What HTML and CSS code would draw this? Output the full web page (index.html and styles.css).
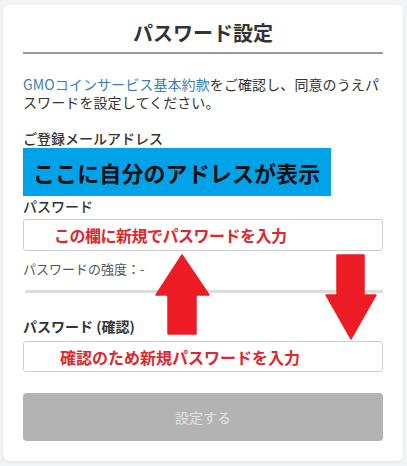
FILE: index.html
```html
<!DOCTYPE html>
<html lang="ja">
<head>
<meta charset="utf-8">
<link rel="stylesheet" href="styles.css">
</head>
<body>
<div class="card">
  <h1 class="title">パスワード設定</h1>
  <p class="lead"><a class="link" href="#">GMOコインサービス基本約款</a>をご確認し、同意のうえパスワードを設定してください。</p>
  <div class="label label-email">ご登録メールアドレス</div>
  <div class="email-box">ここに自分のアドレスが表示</div>
  <div class="label label-pass">パスワード</div>
  <div class="input"><span class="note note-1">この欄に新規でパスワードを入力</span></div>
  <div class="strength">パスワードの強度：-</div>
  <div class="bar"></div>
  <div class="label label-confirm">パスワード (確認)</div>
  <div class="input"><span class="note note-2">確認のため新規パスワードを入力</span></div>
  <button class="submit" type="button">設定する</button>
</div>
<svg class="arrows" width="407" height="466" viewBox="0 0 407 466">
  <polygon points="182,255 209,295 196,295 196,334 168,334 168,295 156,295" fill="#ed1c24" stroke="#ed1c24" stroke-width="1.5" stroke-linejoin="round"/>
  <polygon points="337,255 364,255 364,295 376,295 351,339 326,295 337,295" fill="#ed1c24" stroke="#ed1c24" stroke-width="1.5" stroke-linejoin="round"/>
</svg>
</body>
</html>
```
FILE: styles.css
```css
html, body {
  margin: 0;
  padding: 0;
}
body {
  background: #f2f3f5;
  font-family: "Noto Sans CJK JP", "Noto Sans", sans-serif;
  color: #333;
  position: relative;
  width: 407px;
  height: 466px;
  overflow: hidden;
}
.card {
  margin: 5px 4px 0 3px;
  background: #fff;
  border-radius: 6px;
  box-shadow: 0 1px 3px rgba(0, 0, 0, 0.07);
  padding: 14px 20px 20px;
}
.title {
  margin: 0;
  font-size: 20px;
  line-height: 28px;
  font-weight: 700;
  text-align: center;
  color: #333;
  padding-bottom: 5px;
  border-bottom: 2px solid #9a9a9a;
}
.lead {
  margin: 21px 0 0;
  font-size: 14px;
  line-height: 18px;
  letter-spacing: 0.1px;
  color: #333;
}
.link {
  color: #3a7fb3;
  text-decoration: none;
}
.label {
  font-size: 14px;
  line-height: 19px;
  color: #333;
  font-weight: 500;
}
.label-email {
  margin-top: 18px;
}
.email-box {
  width: 308px;
  height: 48px;
  box-sizing: border-box;
  background: #00a2e8;
  color: #111;
  font-size: 22px;
  font-weight: 700;
  line-height: 48px;
  padding-left: 10px;
  letter-spacing: 0.1px;
}
.label-pass {
  margin-top: 1px;
}
.input {
  margin-top: 3px;
  height: 32px;
  box-sizing: border-box;
  border: 1px solid #cfcfcf;
  border-radius: 3px;
  display: flex;
  align-items: center;
}
.note {
  color: #e1262d;
  font-weight: 700;
  font-size: 16px;
  line-height: 20px;
}
.note-1 {
  padding-left: 30px;
  letter-spacing: -0.5px;
}
.note-2 {
  padding-left: 36px;
}
.strength {
  margin-top: 8px;
  font-size: 13px;
  line-height: 20px;
  color: #555;
}
.bar {
  margin: 11px 0 0 2px;
  height: 3px;
  background: #dcdcdc;
}
.label-confirm {
  margin-top: 24px;
  font-weight: 700;
}
.label-confirm + .input {
  margin-top: 5px;
  height: 31px;
}
.submit {
  display: block;
  width: 100%;
  margin-top: 21px;
  height: 48px;
  border: none;
  border-radius: 4px;
  background: #b3b3b3;
  color: #e2e2e2;
  font-family: "Noto Sans CJK JP", "Noto Sans", sans-serif;
  font-size: 14px;
}
.arrows {
  position: absolute;
  left: 0;
  top: 0;
  pointer-events: none;
}
```
